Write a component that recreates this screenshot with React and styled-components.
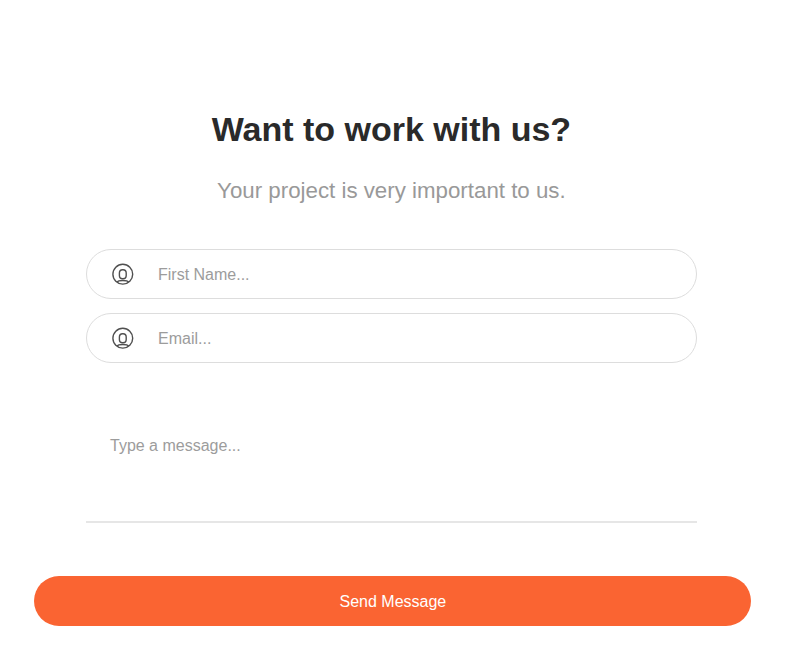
import styled, { createGlobalStyle } from "styled-components";

const GlobalStyle = createGlobalStyle`
  * {
    box-sizing: border-box;
  }

  body {
    margin: 0;
    background: #ffffff;
    font-family: "Liberation Sans", Arial, sans-serif;
  }
`;

const Section = styled.section`
  display: flex;
  flex-direction: column;
  width: 717px;
  margin-left: 34.4px;
  padding-top: 107px;
`;

const Title = styled.h2`
  margin: 0 3px 0 0;
  color: #2a2a2a;
  font-size: 34px;
  line-height: 44px;
  font-weight: 700;
  text-align: center;
`;

const Subtitle = styled.p`
  margin: 25px 3px 0 0;
  color: #999999;
  font-size: 22.3px;
  line-height: 30px;
  text-align: center;
`;

const Fields = styled.div`
  display: flex;
  flex-direction: column;
  gap: 14px;
  margin: 43px 54.4px 0 51.6px;
`;

const Field = styled.label`
  display: flex;
  align-items: center;
  gap: 24px;
  height: 50px;
  padding: 0 25px;
  border: 1px solid #dddddd;
  border-radius: 25px;
`;

const Input = styled.input`
  flex: 1;
  padding: 1px 0 0;
  border: 0;
  outline: 0;
  background: transparent;
  font: 16px "Liberation Sans", Arial, sans-serif;

  &::placeholder {
    color: #9c9c9c;
    opacity: 1;
  }
`;

const Message = styled.textarea`
  height: 110px;
  margin: 50px 54.4px 0 51.6px;
  padding: 24px 24px 0;
  border: 0;
  border-bottom: 2px solid #e6e6e6;
  outline: 0;
  resize: none;
  font: 16px "Liberation Sans", Arial, sans-serif;

  &::placeholder {
    color: #9c9c9c;
    opacity: 1;
  }
`;

const SendButton = styled.button`
  height: 50px;
  margin-top: 53px;
  padding: 1px 0 0;
  border: 0;
  border-radius: 25px;
  background: #fa6432;
  color: #ffffff;
  font: 16px "Liberation Sans", Arial, sans-serif;
`;

const UserIcon = () => (
  <svg width="22" height="22" viewBox="0 0 22 22" fill="none" stroke="#505050" strokeWidth="1.4">
    <circle cx="10.8" cy="11.2" r="9.9" />
    <rect x="7.4" y="6.7" width="6.8" height="9" rx="3.2" />
    <path d="M5 19.2C5.8 17.8 7.7 17.5 10.8 17.5S15.8 17.8 16.6 19.2" />
  </svg>
);

const fields = [
  { name: "firstName", type: "text", placeholder: "First Name..." },
  { name: "email", type: "email", placeholder: "Email..." },
];

export default function App() {
  return (
    <>
      <GlobalStyle />
      <Section>
        <Title>Want to work with us?</Title>
        <Subtitle>Your project is very important to us.</Subtitle>
        <Fields>
          {fields.map((item) => (
            <Field key={item.name}>
              <UserIcon />
              <Input name={item.name} type={item.type} placeholder={item.placeholder} />
            </Field>
          ))}
        </Fields>
        <Message placeholder="Type a message..." />
        <SendButton type="button">Send Message</SendButton>
      </Section>
    </>
  );
}
